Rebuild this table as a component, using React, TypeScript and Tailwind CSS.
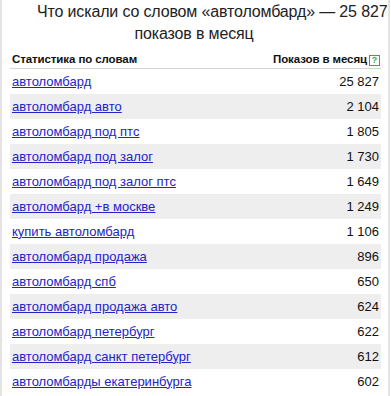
const rows = [
  { q: 'автоломбард', n: '25 827' },
  { q: 'автоломбард авто', n: '2 104' },
  { q: 'автоломбард под птс', n: '1 805' },
  { q: 'автоломбард под залог', n: '1 730' },
  { q: 'автоломбард под залог птс', n: '1 649' },
  { q: 'автоломбард +в москве', n: '1 249' },
  { q: 'купить автоломбард', n: '1 106' },
  { q: 'автоломбард продажа', n: '896' },
  { q: 'автоломбард спб', n: '650' },
  { q: 'автоломбард продажа авто', n: '624' },
  { q: 'автоломбард петербург', n: '622' },
  { q: 'автоломбард санкт петербург', n: '612' },
  { q: 'автоломбарды екатеринбурга', n: '602' },
];

export default function App() {
  return (
    <div className="w-[390px] h-[396px] overflow-hidden bg-white border-x-2 border-[#e3e3e3] font-['Liberation_Sans',Arial,sans-serif] text-[#111]">
      {/* Title */}
      <div className="pt-[1px] text-[16px] leading-[22px] tracking-[-0.15px] text-[#222]">
        <div className="pl-[35px] whitespace-nowrap">Что искали со словом «автоломбард» — 25 827</div>
        <div className="pr-[2px] text-center">показов в месяц</div>
      </div>

      {/* Table */}
      <div className="mx-[8px] mt-[7px] w-[371px]">
        <div className="flex items-center justify-between h-[17px] border-b border-[#d4d4d4] text-[11.5px] tracking-[-0.1px] font-bold">
          <span className="pl-[2px]">Статистика по словам</span>
          <span className="flex items-center gap-[2px]">
            Показов в месяц
            <span className="flex items-center justify-center w-[11px] h-[11px] mr-[1px] border border-[#44a144] text-[#44a144] text-[9px] leading-none font-bold">
              ?
            </span>
          </span>
        </div>
        {rows.map((r, i) => (
          <div
            key={r.q}
            className={`flex items-center justify-between h-[25px] px-[2px] text-[13px] ${i % 2 === 1 ? 'bg-[#eeeeee]' : ''}`}
          >
            <a href="#" className="text-[#2323c8] underline">{r.q}</a>
            <span>{r.n}</span>
          </div>
        ))}
      </div>
    </div>
  );
}
